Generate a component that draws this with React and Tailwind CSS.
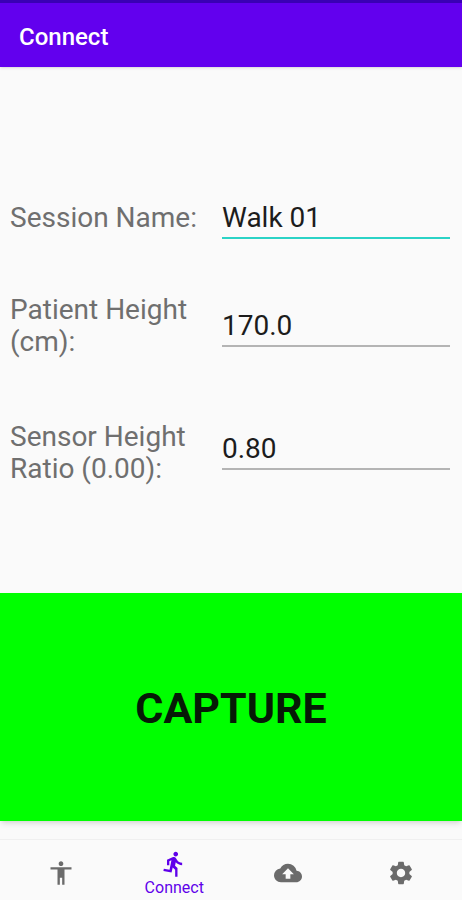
import { useState } from 'react';
import { MdAccessibility, MdBackup, MdDirectionsRun, MdSettings } from 'react-icons/md';
import clsx from 'clsx';

const fields = [
  { name: 'sessionName', label: 'Session Name:' },
  { name: 'patientHeight', label: 'Patient Height (cm):' },
  { name: 'sensorRatio', label: 'Sensor Height Ratio (0.00):', labelClass: 'pt-2' },
];

const tabs = [
  { id: 'body', label: 'Body', Icon: MdAccessibility },
  { id: 'connect', label: 'Connect', Icon: MdDirectionsRun },
  { id: 'upload', label: 'Upload', Icon: MdBackup },
  { id: 'settings', label: 'Settings', Icon: MdSettings },
];

function Field({ name, label, labelClass, value, active, onChange, onFocus }) {
  return (
    <div className="grid grid-cols-[200px_1fr] items-center gap-3">
      <label htmlFor={name} className={clsx('text-[28px] leading-8 text-[#6f6f6f]', labelClass)}>
        {label}
      </label>
      <input
        id={name}
        name={name}
        type="text"
        value={value}
        onChange={onChange}
        onFocus={onFocus}
        className={clsx(
          'h-[42px] w-full min-w-0 border-b-2 bg-transparent text-[28px] leading-8 text-[#1c1c1c] outline-none',
          active ? 'border-[#2bd3c6]' : 'border-[#b4b4b4]'
        )}
      />
    </div>
  );
}

function BottomNav({ current, onSelect }) {
  return (
    <nav className="flex h-[61px] border-t border-[#f0f0f0] bg-[#fafafa] px-1">
      {tabs.map(({ id, label, Icon }) => (
        <button
          key={id}
          type="button"
          aria-label={label}
          onClick={() => onSelect(id)}
          className={clsx(
            'flex flex-1 flex-col items-center gap-0.5',
            current === id ? 'justify-end pb-1 text-[#5f00ea]' : 'justify-center pt-1.5 text-[#6b6b6b]'
          )}
        >
          <Icon size={28} />
          {current === id && <span className="text-base leading-4">{label}</span>}
        </button>
      ))}
    </nav>
  );
}

function App() {
  const [tab, setTab] = useState('connect');
  const [focused, setFocused] = useState('sessionName');
  const [values, setValues] = useState({
    sessionName: 'Walk 01',
    patientHeight: '170.0',
    sensorRatio: '0.80',
  });

  const handleChange = (e) => {
    const { name, value } = e.target;
    setValues({ ...values, [name]: value });
  };

  return (
    <div className="flex min-h-screen flex-col bg-[#fafafa] font-['Roboto',sans-serif]">
      {/* status bar edge + app bar */}
      <header className="border-t-3 border-[#3a00b4] bg-[#6200ee] px-[19px] pt-[18px] pb-[14px] shadow-sm">
        <h1 className="text-2xl leading-8 font-medium text-white">Connect</h1>
      </header>

      <main className="flex flex-1 flex-col">
        <form className="flex flex-col gap-[55px] pt-[130px] pr-3 pb-[108px] pl-[10px]">
          {fields.map((field) => (
            <Field
              key={field.name}
              {...field}
              value={values[field.name]}
              active={focused === field.name}
              onChange={handleChange}
              onFocus={() => setFocused(field.name)}
            />
          ))}
        </form>
        <button
          type="button"
          className="mb-[18px] min-h-[228px] flex-1 bg-[#00ff00] pt-0.5 text-[43px] font-bold text-[#061a06] shadow-md"
        >
          CAPTURE
        </button>
      </main>

      <BottomNav current={tab} onSelect={setTab} />
    </div>
  );
}

export default App;
